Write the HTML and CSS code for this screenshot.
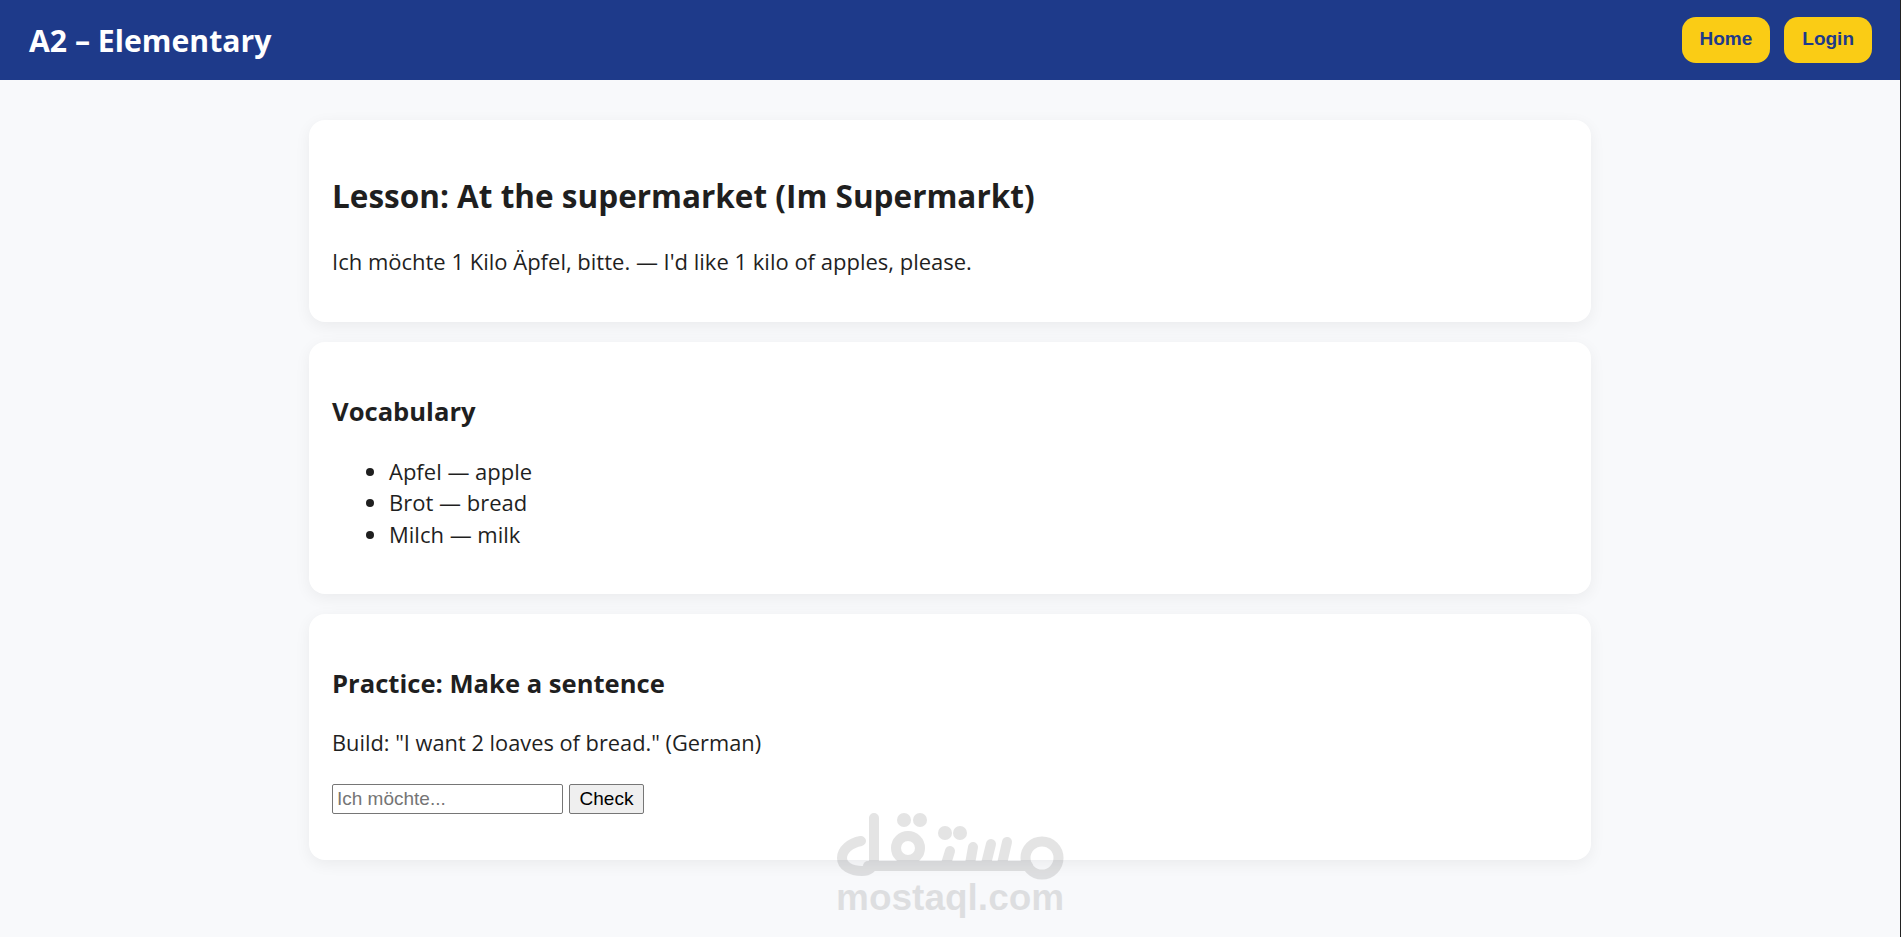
FILE: index.html
```html
<!DOCTYPE html>
<html lang="en">
<head>
    <meta charset="UTF-8">
    <title>A2 – Elementary</title>
    <link rel="stylesheet" href="styles.css">
</head>
<body>
    <header class="topbar">
        <h1>A2 – Elementary</h1>
        <nav class="topnav">
            <a class="nav-btn" href="#">Home</a>
            <a class="nav-btn" href="#">Login</a>
        </nav>
    </header>

    <main class="container">
        <section class="card">
            <h2>Lesson: At the supermarket (Im Supermarkt)</h2>
            <p>Ich möchte 1 Kilo Äpfel, bitte. — I'd like 1 kilo of apples, please.</p>
        </section>

        <section class="card">
            <h3>Vocabulary</h3>
            <ul>
                <li>Apfel — apple</li>
                <li>Brot — bread</li>
                <li>Milch — milk</li>
            </ul>
        </section>

        <section class="card">
            <h3>Practice: Make a sentence</h3>
            <p>Build: "I want 2 loaves of bread." (German)</p>
            <div class="answer-row">
                <input type="text" placeholder="Ich möchte...">
                <button>Check</button>
            </div>
        </section>
    </main>

    <div class="watermark">
        <svg class="wm-logo" viewBox="836 805 228 80" width="228" height="80" fill="none" stroke="#000" stroke-width="10" stroke-linecap="round" stroke-linejoin="round">
            <path d="M861 841C850 843 842 850 842 858C842 866 851 871 862 871C868 871 874 868 874 860V818"/>
            <path d="M868 866H1028"/>
            <circle cx="908" cy="848" r="12"/>
            <circle cx="1042" cy="858" r="16.5"/>
            <path d="M946 864L950 851M970 864L973 847M986 864L991 844M1002 864L1007 842"/>
            <g fill="#000" stroke="none">
                <circle cx="904" cy="820" r="7"/>
                <circle cx="920" cy="820" r="7"/>
                <circle cx="945" cy="833" r="7"/>
                <circle cx="960" cy="833" r="7"/>
            </g>
        </svg>
        <div class="wm-url">mostaql.com</div>
    </div>
</body>
</html>
```

FILE: styles.css
```css
* {
    box-sizing: border-box;
}

html {
    height: 100%;
    background: #222;
}

body {
    margin: 0;
    width: 1900px;
    height: 100%;
    background: #f8f9fb;
    color: #1f1f1f;
    font-family: "Open Sans", sans-serif;
    font-size: 22px;
    overflow: hidden;
    position: relative;
}

.topbar {
    height: 80px;
    padding: 0 28px 0 29px;
    display: flex;
    align-items: center;
    justify-content: space-between;
    background: #1e3a8a;
    color: #fff;
}

.topbar h1 {
    margin: 0;
    font-size: 30.2px;
    font-weight: 700;
}

.topnav {
    display: flex;
    gap: 14px;
}

.nav-btn {
    display: block;
    padding: 0 18px;
    height: 46px;
    line-height: 44px;
    background: #facc15;
    color: #1e3a8a;
    border-radius: 14px;
    font-family: "Liberation Sans", sans-serif;
    font-size: 19px;
    font-weight: 700;
    text-decoration: none;
}

.container {
    width: 1282px;
    margin: 40px auto 0;
    display: flex;
    flex-direction: column;
    gap: 20px;
}

.card {
    padding: 23px;
    background: #fff;
    border-radius: 16px;
    box-shadow: 0 4px 16px rgba(0, 0, 0, 0.06);
}

.card h2 {
    margin: 29px 0 26px;
    font-size: 31.5px;
    line-height: 48px;
}

.card h3 {
    margin: 27px 0 24px;
    font-size: 25.6px;
    line-height: 40px;
}

.card p {
    margin: 0 0 23px;
    font-size: 22px;
    line-height: 30px;
}

.card h3 + p {
    margin-bottom: 26px;
    font-size: 21.8px;
}

.card ul {
    margin: 0 0 21px;
    padding-left: 57px;
    font-size: 22px;
    line-height: 31.3px;
}

.answer-row {
    display: flex;
    align-items: center;
    gap: 6px;
    padding-bottom: 23px;
}

.answer-row input {
    width: 231px;
    height: 30px;
    padding: 1px 4px;
    border: 1px solid #767676;
    border-radius: 2px;
    font-family: "Liberation Sans", sans-serif;
    font-size: 19px;
}

.answer-row input::placeholder {
    color: #757575;
}

.answer-row button {
    width: 75px;
    height: 30px;
    padding: 1px 0;
    border: 1px solid #767676;
    border-radius: 2px;
    background: #efefef;
    color: #000;
    font-family: "Liberation Sans", sans-serif;
    font-size: 19px;
}

/* watermark on top of everything */
.watermark {
    position: absolute;
    left: 836px;
    top: 805px;
    width: 228px;
    text-align: center;
    color: #000;
    opacity: 0.1;
    pointer-events: none;
}

.wm-logo {
    display: block;
}

.wm-url {
    margin-top: -6px;
    font-family: "Liberation Sans", sans-serif;
    font-weight: 700;
    font-size: 37px;
    line-height: 38px;
}
```
